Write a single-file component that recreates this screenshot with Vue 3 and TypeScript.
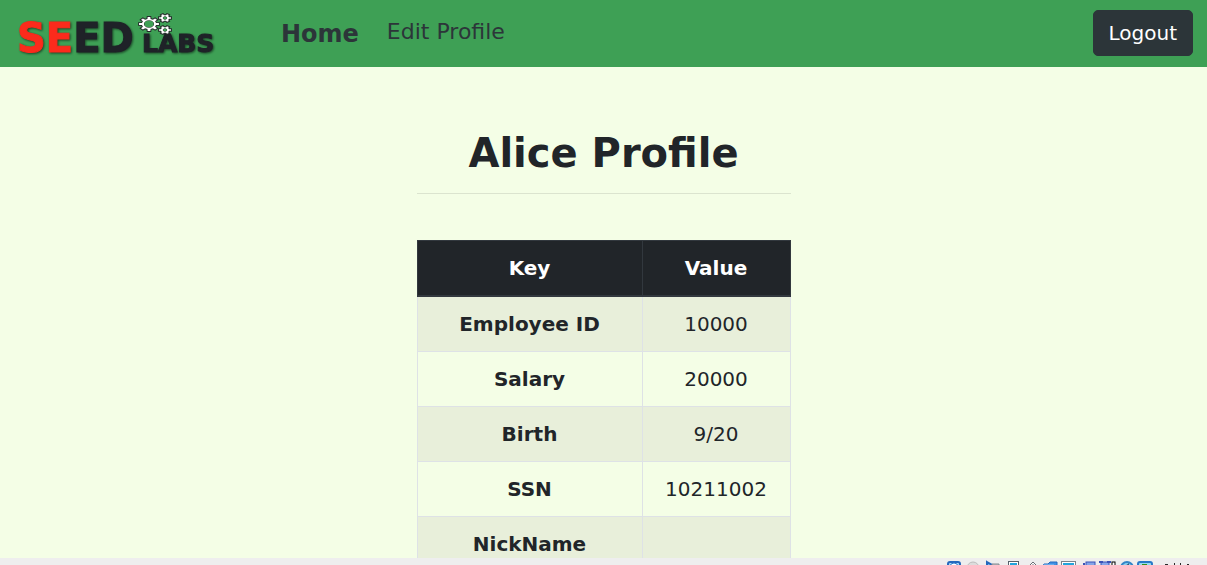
<script setup lang="ts">
interface Field {
  key: string
  value: string
}

interface Gear {
  cx: number
  cy: number
  rx: number
  ry: number
  teeth: number
  hole: number
}

const fields: Field[] = [
  { key: 'Employee ID', value: '10000' },
  { key: 'Salary', value: '20000' },
  { key: 'Birth', value: '9/20' },
  { key: 'SSN', value: '10211002' },
  { key: 'NickName', value: '' },
]

const gears: Gear[] = [
  { cx: 149, cy: 24, rx: 10, ry: 7, teeth: 8, hole: 0.45 },
  { cx: 165, cy: 18, rx: 6, ry: 4, teeth: 6, hole: 0.3 },
  { cx: 165, cy: 30, rx: 6, ry: 4, teeth: 6, hole: 0.3 },
]

function gearOutline(gear: Gear): string {
  const step = (Math.PI * 2) / gear.teeth
  const points: string[] = []
  for (let i = 0; i < gear.teeth; i++) {
    const corners: [number, number][] = [[-0.28, 0.72], [-0.17, 1], [0.17, 1], [0.28, 0.72]]
    for (const [turn, reach] of corners) {
      const angle = (i + turn) * step
      const x = gear.cx + Math.cos(angle) * gear.rx * reach
      const y = gear.cy + Math.sin(angle) * gear.ry * reach
      points.push(`${x.toFixed(2)} ${y.toFixed(2)}`)
    }
  }
  return `M${points.join('L')}Z`
}
</script>

<template>
  <div class="screen">
    <header class="navbar">
      <a class="logo" href="#" aria-label="SEED Labs">
        <svg width="206" height="46" viewBox="14 10 206 46">
          <g class="wordmark">
            <text x="17" y="52" font-size="40"><tspan class="red">SE</tspan>ED</text>
            <text x="142" y="52" font-size="25">LABS</text>
          </g>
          <g v-for="gear in gears" :key="gear.cy" class="gear">
            <path :d="gearOutline(gear)" />
            <ellipse
              class="hole"
              :cx="gear.cx"
              :cy="gear.cy"
              :rx="gear.rx * gear.hole"
              :ry="gear.ry * gear.hole"
            />
          </g>
        </svg>
      </a>
      <nav class="links">
        <a class="home" href="#">Home</a>
        <a class="edit" href="#">Edit Profile</a>
      </nav>
      <button class="logout" type="button">Logout</button>
    </header>

    <main class="content">
      <section class="profile">
        <h1>Alice Profile</h1>
        <hr />
        <table>
          <colgroup>
            <col class="key-col" />
            <col />
          </colgroup>
          <thead>
            <tr>
              <th scope="col">Key</th>
              <th scope="col">Value</th>
            </tr>
          </thead>
          <tbody>
            <tr v-for="field in fields" :key="field.key">
              <th scope="row">{{ field.key }}</th>
              <td>{{ field.value }}</td>
            </tr>
          </tbody>
        </table>
      </section>
    </main>

    <footer class="status">
      <svg width="260" height="7" viewBox="947 558 260 7" aria-hidden="true">
        <!-- disk -->
        <rect x="948" y="562" width="12" height="8" rx="2" fill="#a9d8f8" stroke="#2468bd" stroke-width="2" />
        <circle cx="954" cy="567" r="4" fill="#fff" stroke="#2f7fd0" />
        <!-- optical drive -->
        <circle cx="973" cy="568" r="6" fill="#dcdcdc" stroke="#bdbdbd" />
        <!-- audio -->
        <path d="M987 562l7 4v4h-7z" fill="#69b7ee" stroke="#2468bd" stroke-width="2" />
        <path d="M992 564h7v3h-7z" fill="#b9bdc2" stroke="#85898e" />
        <!-- network -->
        <rect x="1008" y="561" width="11" height="8" fill="#56616b" />
        <rect x="1009" y="562" width="9" height="8" fill="#fff" />
        <rect x="1010" y="563" width="7" height="8" fill="#22a5dc" />
        <!-- usb -->
        <path d="M1027 568l6-6 6 6" fill="#fff" stroke="#666c73" />
        <path d="M1033 564v3" stroke="#666c73" />
        <!-- shared folder -->
        <path d="M1042 568l2-4h4l2-2h7v6z" fill="#3f91e5" stroke="#2468bd" />
        <path d="M1044 565h10" stroke="#8cc7f5" />
        <!-- display -->
        <rect x="1061" y="561" width="15" height="8" fill="#7a848c" />
        <rect x="1062" y="562" width="13" height="8" fill="#fff" />
        <rect x="1063" y="563" width="11" height="8" fill="#22a5dc" />
        <!-- recording -->
        <rect x="1086" y="562" width="9" height="7" fill="#84a5e8" stroke="#3a52b7" />
        <path d="M1084 563v4" stroke="#3a52b7" stroke-width="2" />
        <!-- processor -->
        <rect x="1101" y="562" width="8" height="7" fill="#84a5e8" stroke="#3a52b7" />
        <path d="M1099 562h4m4 0h4" stroke="#3a52b7" stroke-width="2" />
        <rect x="1112" y="562" width="3" height="8" fill="#fff" stroke="#000" />
        <!-- mouse integration -->
        <circle cx="1127" cy="568" r="6" fill="#87d0ef" stroke="#3285c8" stroke-width="2" />
        <path d="M1125 566l4-3v3z" fill="#315d84" />
        <!-- keyboard -->
        <rect x="1138" y="562" width="14" height="8" rx="2" fill="#94dcef" stroke="#2879c8" stroke-width="2" />
        <path d="M1142 565h5" stroke="#37901b" stroke-width="2" />
        <!-- host key -->
        <path d="M1165 564h3v1h-3zM1174 563h1v2h-1zM1180 563h1v2h-1zM1187 564h2v1h-2z" fill="#292929" />
      </svg>
    </footer>
  </div>
</template>

<style>
body {
  margin: 0;
}
</style>

<style scoped>
.screen {
  display: flex;
  flex-direction: column;
  height: 100vh;
  overflow: hidden;
  background: #f4fee6;
  color: #212529;
  font: 20px/30px "DejaVu Sans", sans-serif;
}
.navbar {
  display: flex;
  flex: none;
  align-items: center;
  padding: 10px 14px 11px;
  background: #3ea055;
}
.logo {
  display: flex;
}
.logo svg {
  overflow: visible;
}
.wordmark {
  fill: #1f2228;
  stroke: #1f2228;
  stroke-width: 1px;
  font-family: "DejaVu Sans", sans-serif;
  font-weight: bold;
  filter: drop-shadow(1px 1px 1px #1b4527);
}
.red {
  fill: #fb2b1c;
  stroke: #fb2b1c;
}
.gear {
  fill: #fff;
  stroke: #252b2b;
  stroke-width: 2px;
  paint-order: stroke;
}
.gear .hole {
  fill: #3ea055;
  stroke-width: 1px;
}
.links {
  display: flex;
  flex: 1;
  gap: 28px;
  margin-left: 61px;
}
.links a {
  color: #2c3539;
  text-decoration: none;
}
.home {
  padding-top: 2px;
  font-size: 24px;
  font-weight: bold;
}
.edit {
  font-size: 22px;
}
.logout {
  padding: 7px 15px;
  border: 1px solid #2c3539;
  border-radius: 5px;
  background: #2c3539;
  color: #fff;
  font: inherit;
}
.content {
  flex: 1;
  min-height: 0;
  overflow: hidden;
}
.profile {
  width: 100%;
  max-width: 374px;
  margin: 0 auto;
  padding-top: 62px;
  text-align: center;
}
h1 {
  margin: 0;
  font-size: 40px;
  line-height: 48px;
}
hr {
  margin: 16px 0 46px;
  border: 0;
  border-top: 1px solid #dbe4cf;
}
table {
  width: 100%;
  border-collapse: collapse;
}
.key-col {
  width: 225px;
}
th,
td {
  padding: 12px;
  border: 1px solid #dee2e6;
}
tbody tr:nth-child(odd) {
  background: #e8efda;
}
thead th {
  border: 1px solid #32383e;
  border-bottom-width: 2px;
  background: #212529;
  color: #fff;
}
.status {
  display: flex;
  flex: none;
  justify-content: flex-end;
  background: #eee;
}
</style>
